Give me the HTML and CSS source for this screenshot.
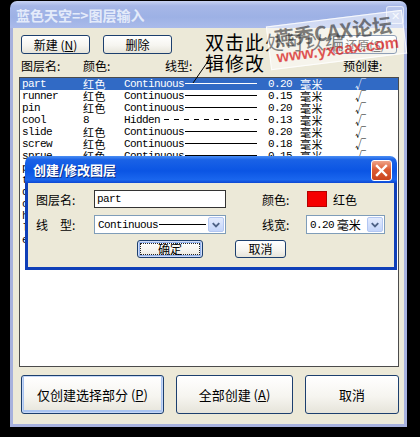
FILE: index.html
```html
<!DOCTYPE html>
<html>
<head>
    <meta charset="utf-8">
    <title>蓝色天空=&gt;图层输入</title>
    <link rel="stylesheet" href="styles.css">
</head>
<body>
<div class="screen">
    <div class="window">
        <div class="titlebar">
            <span class="title">蓝色天空=&gt;图层输入</span>
            <span class="close-off">✕</span>
        </div>
        <div class="client">
            <div class="toolbar">
                <button class="btn">新建 (<u>N</u>)</button>
                <button class="btn">删除</button>
                <button class="btn restore">还原(<u>S</u>)</button>
            </div>
            <div class="headers">
                <span>图层名:</span>
                <span>颜色:</span>
                <span>线型:</span>
                <span>预创建:</span>
            </div>
            <div class="listbox">
                <div class="row sel">
                    <span>part</span><span class="cj">红色</span>
                    <span class="ltype">Continuous<i></i></span>
                    <span>0.20</span><span class="cj">毫米</span><span class="cj">√</span>
                </div>
                <div class="row">
                    <span>runner</span><span class="cj">红色</span>
                    <span class="ltype">Continuous<i></i></span>
                    <span>0.15</span><span class="cj">毫米</span><span class="cj">√</span>
                </div>
                <div class="row">
                    <span>pin</span><span class="cj">红色</span>
                    <span class="ltype">Continuous<i></i></span>
                    <span>0.20</span><span class="cj">毫米</span><span class="cj">√</span>
                </div>
                <div class="row">
                    <span>cool</span><span>8</span>
                    <span class="ltype">Hidden<i class="dash"></i></span>
                    <span>0.13</span><span class="cj">毫米</span><span class="cj">√</span>
                </div>
                <div class="row">
                    <span>slide</span><span class="cj">红色</span>
                    <span class="ltype">Continuous<i></i></span>
                    <span>0.20</span><span class="cj">毫米</span><span class="cj">√</span>
                </div>
                <div class="row">
                    <span>screw</span><span class="cj">红色</span>
                    <span class="ltype">Continuous<i></i></span>
                    <span>0.18</span><span class="cj">毫米</span><span class="cj">√</span>
                </div>
                <div class="row">
                    <span>sprue</span><span class="cj">红色</span>
                    <span class="ltype">Continuous<i></i></span>
                    <span>0.15</span><span class="cj">毫米</span><span class="cj">√</span>
                </div>
                <div class="row">
                    <span>plate</span><span class="cj">红色</span>
                    <span class="ltype">Continuous<i></i></span>
                    <span>0.20</span><span class="cj">毫米</span><span class="cj">√</span>
                </div>
                <div class="row">
                    <span>text</span><span>7</span>
                    <span class="ltype">Continuous<i></i></span>
                    <span>0.13</span><span class="cj">毫米</span><span class="cj">√</span>
                </div>
                <div class="row">
                    <span>dim</span><span>3</span>
                    <span class="ltype">Continuous<i></i></span>
                    <span>0.13</span><span class="cj">毫米</span><span class="cj">√</span>
                </div>
                <div class="row">
                    <span>center</span><span>1</span>
                    <span class="ltype">Center<i class="dash"></i></span>
                    <span>0.13</span><span class="cj">毫米</span><span class="cj">√</span>
                </div>
                <div class="row">
                    <span>hatch</span><span>8</span>
                    <span class="ltype">Continuous<i></i></span>
                    <span>0.13</span><span class="cj">毫米</span><span class="cj">√</span>
                </div>
                <div class="row">
                    <span>line</span><span>2</span>
                    <span class="ltype">Continuous<i></i></span>
                    <span>0.15</span><span class="cj">毫米</span><span class="cj">√</span>
                </div>
                <div class="row">
                    <span>ejector</span><span>4</span>
                    <span class="ltype">Continuous<i></i></span>
                    <span>0.15</span><span class="cj">毫米</span><span class="cj">√</span>
                </div>
            </div>
            <div class="actions">
                <button class="btn big default">仅创建选择部分 (<u>P</u>)</button>
                <button class="btn big mid">全部创建 (<u>A</u>)</button>
                <button class="btn big last">取消</button>
            </div>
        </div>
    </div>

    <!-- annotation drawn on the screenshot -->
    <div class="note">双击此处可以编辑修改</div>
    <svg class="leader" width="26" height="30" viewBox="0 0 26 30">
        <line x1="22" y1="2" x2="4" y2="28" stroke="#000" stroke-width="1"/>
    </svg>

    <div class="stamp">
        <div class="stamp-cn">燕秀CAX论坛</div>
        <div class="stamp-url">www.yxcax.com</div>
    </div>

    <div class="dialog">
        <div class="dlg-title">
            创建/修改图层
            <span class="dlg-close">
                <svg width="13" height="13" viewBox="0 0 13 13">
                    <path d="M2 2 L11 11 M11 2 L2 11" stroke="#fff" stroke-width="2.4" stroke-linecap="square"/>
                </svg>
            </span>
        </div>
        <div class="dlg-body">
            <div class="dlg-row">
                <span class="lbl">图层名:</span>
                <span class="edit">part</span>
                <span class="lbl2">颜色:</span>
                <span class="swatch"></span>
                <span>红色</span>
            </div>
            <div class="dlg-row r2">
                <span class="lbl">线<span class="sp"></span>型:</span>
                <span class="combo">
                    <span class="val mono">Continuous<i></i></span>
                    <span class="arrow"><svg width="15" height="15" viewBox="0 0 15 15"><path d="M4 6 L7.5 9.5 L11 6" fill="none" stroke="#4d6185" stroke-width="2"/></svg></span>
                </span>
                <span class="lbl2 w44">线宽:</span>
                <span class="combo small">
                    <span class="val"><span class="mono">0.20</span>&nbsp;毫米</span>
                    <span class="arrow"><svg width="15" height="15" viewBox="0 0 15 15"><path d="M4 6 L7.5 9.5 L11 6" fill="none" stroke="#4d6185" stroke-width="2"/></svg></span>
                </span>
            </div>
            <div class="dlg-row r3">
                <button class="btn ok">确定</button>
                <button class="btn cancel">取消</button>
            </div>
        </div>
    </div>
</div>
</body>
</html>
```

FILE: styles.css
```css
* { box-sizing: border-box; }
body {
    margin: 0;
    background: #000;
    font-family: "Noto Sans CJK SC", "Liberation Sans", sans-serif;
    font-size: 12px;
    color: #000;
}
.screen {
    position: relative;
    width: 420px;
    height: 437px;
    overflow: hidden;
    padding-top: 1px;
}

/* main window (inactive) */
.window { margin-left: 10px; width: 397px; }
.titlebar {
    position: relative;
    height: 27px;
    border-radius: 7px 7px 0 0;
    background: linear-gradient(#c8d3f3, #a6b7e7 18%, #9db1e5 60%, #aabbea);
    padding: 0 0 0 6px;
    display: flex;
    align-items: center;
}
.title {
    color: #e4ebfa;
    font-weight: bold;
    font-size: 14px;
}
.close-off {
    position: absolute;
    right: 3px;
    top: 5px;
    width: 18px;
    height: 18px;
    border: 1px solid rgba(255,255,255,.6);
    border-radius: 3px;
    background: rgba(255,255,255,.2);
    color: #eef2fb;
    font-size: 11px;
    line-height: 16px;
    text-align: center;
}
.client {
    background: #ece9d8;
    border: 3px solid #a7b1dd;
    border-top: 0;
    height: 399px;
}

/* xp push buttons */
.btn {
    font-family: "Noto Sans CJK SC", "Liberation Sans", sans-serif;
    font-size: 12px;
    color: #000;
    padding: 0;
    border: 1px solid #1c3f6e;
    border-radius: 3px;
    background: linear-gradient(#ffffff, #f6f5f0 55%, #e6e4da);
    line-height: 1;
}
.btn u { text-decoration: underline; }

.toolbar {
    display: flex;
    gap: 13px;
    padding: 7px 7px 0 8px;
}
.toolbar .btn { width: 69px; height: 19px; }
.toolbar .restore { margin-left: auto; width: 64px; }

.headers {
    display: grid;
    grid-template-columns: 62px 82px 178px auto;
    height: 23px;
    line-height: 23px;
    padding-left: 8px;
}

.listbox {
    margin-left: 6px;
    width: 380px;
    height: 290px;
    background: #fff;
    border: 1px solid #4b4b4b;
    overflow: hidden;
}
.row {
    display: grid;
    grid-template-columns: 61px 41px 144px 32px 55px auto;
    height: 12px;
    line-height: 12px;
    padding-left: 2px;
    font-family: "Liberation Mono", "Noto Sans CJK SC", monospace;
    font-size: 11px;
    letter-spacing: -0.6px;
    white-space: nowrap;
}
.row > span { height: 12px; }
.row .cj {
    font-family: "Noto Sans CJK SC", sans-serif;
    font-size: 11px;
    letter-spacing: 0.5px;
}
.row.sel { background: #316ac5; color: #fff; }
.ltype {
    display: flex;
    align-items: center;
    padding-right: 11px;
}
.ltype i, .val i {
    flex: 1;
    height: 1px;
    background: currentColor;
    margin: 0 0 1px 1px;
}
.ltype i.dash {
    background: repeating-linear-gradient(90deg, currentColor 0 5px, transparent 5px 10px);
    margin-left: 4px;
}

.actions {
    display: flex;
    gap: 12px;
    padding: 8px 0 0 8px;
}
.actions .btn { height: 39px; width: 143px; font-size: 13px; }
.actions .mid { width: 117px; }
.actions .last { width: 94px; }
.actions .default { box-shadow: inset 0 0 0 1px #c6d8f7, inset 0 -1px 0 2px #a9c4f0; }

/* annotation */
.note {
    position: absolute;
    left: 205px;
    top: 31px;
    width: 146px;
    font-size: 19px;
    line-height: 21px;
    letter-spacing: 1px;
    color: #000;
}
.leader { position: absolute; left: 189px; top: 55px; }

.stamp {
    position: absolute;
    left: 268px;
    top: 18px;
    padding: 2px 6px 3px 6px;
    transform: rotate(-7deg);
    background: rgba(255,255,255,.5);
    border: 1px solid rgba(255,255,255,.8);
    line-height: 1;
}
.stamp-cn {
    font-size: 20px;
    font-weight: bold;
    color: rgba(40,40,40,.6);
}
.stamp-url {
    font-family: "Liberation Sans", sans-serif;
    font-size: 16px;
    font-weight: bold;
    color: rgba(215,30,30,.75);
    margin-top: 1px;
}

/* modal dialog */
.dialog {
    position: absolute;
    left: 25px;
    top: 156px;
    width: 372px;
}
.dlg-title {
    position: relative;
    height: 27px;
    border-radius: 7px 7px 0 0;
    background: linear-gradient(#4a8ef4, #1a62e6 14%, #0b55e4 55%, #1a66ee 88%, #0c47d2);
    color: #fff;
    font-weight: bold;
    font-size: 13px;
    display: flex;
    align-items: center;
    padding-left: 8px;
    text-shadow: 1px 1px 0 #0a2f8a;
}
.dlg-close {
    position: absolute;
    right: 5px;
    top: 4px;
    width: 21px;
    height: 21px;
    border: 1px solid #fff;
    border-radius: 3px;
    background: linear-gradient(#f0a58a, #dc5c33 45%, #c9441e);
    display: flex;
    align-items: center;
    justify-content: center;
}
.dlg-body {
    background: #ece9d8;
    border: 3px solid #0f3fb8;
    border-top: 0;
    height: 87px;
    padding: 7px 0 0 8px;
}
.dlg-row {
    display: flex;
    align-items: center;
    height: 18px;
}
.dlg-row.r2 { margin-top: 7px; height: 19px; }
.dlg-row.r3 { margin-top: 6px; padding-left: 101px; gap: 32px; }
.lbl { width: 58px; }
.lbl .sp { display: inline-block; width: 12px; }
.lbl2 { width: 45px; margin-left: 36px; }
.lbl2.w44 { width: 44px; }
.edit {
    width: 132px;
    height: 18px;
    background: #fff;
    border: 1px solid #333;
    padding-left: 2px;
    font-family: "Liberation Mono", monospace;
    font-size: 11px;
    letter-spacing: -0.6px;
    line-height: 16px;
}
.swatch {
    width: 20px;
    height: 16px;
    background: #f50000;
    border: 1px solid #b30000;
    margin-right: 6px;
}
.combo {
    display: flex;
    width: 132px;
    height: 19px;
    background: #fff;
    border: 1px solid #7f9db9;
    padding: 1px;
}
.combo.small { width: 79px; }
.combo .val {
    flex: 1;
    display: flex;
    align-items: center;
    padding: 0 2px;
    white-space: nowrap;
}
.mono {
    font-family: "Liberation Mono", monospace;
    font-size: 11px;
    letter-spacing: -0.6px;
}
.combo .arrow {
    width: 16px;
    height: 15px;
    border: 1px solid #b3c7f2;
    border-radius: 2px;
    background: linear-gradient(#e3ebfd, #c4d5fa);
    display: flex;
    align-items: center;
    justify-content: center;
}
.ok, .cancel { height: 18px; }
.ok {
    width: 66px;
    box-shadow: inset 0 0 0 1px #cfdcf7, inset 0 0 0 2px #93b3ee;
    outline: 1px dotted #222;
    outline-offset: -4px;
}
.cancel { width: 51px; }
```
